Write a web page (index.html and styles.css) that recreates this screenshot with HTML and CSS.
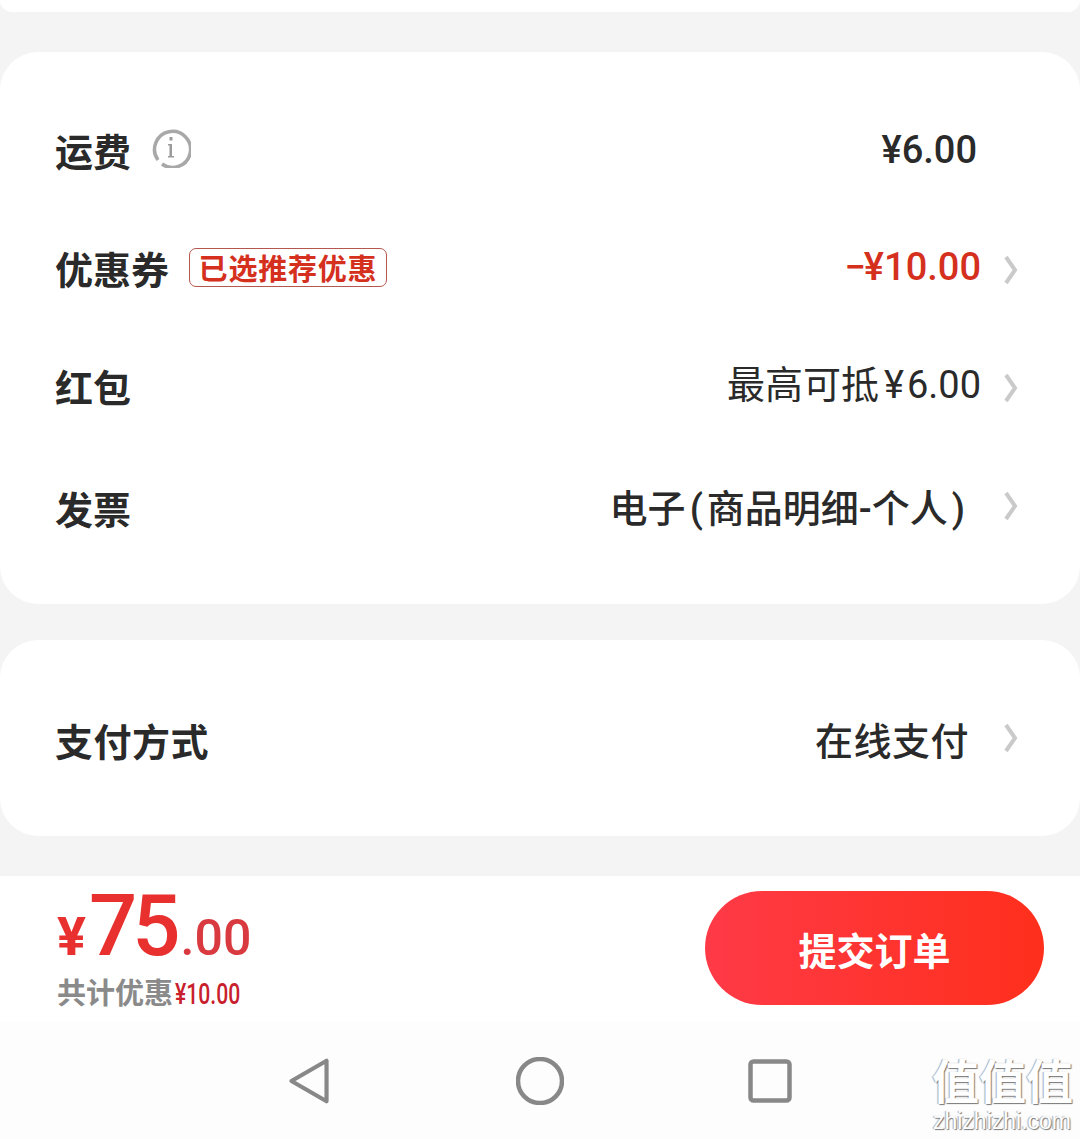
FILE: index.html
```html
<!DOCTYPE html>
<html lang="zh-CN">
<head>
<meta charset="utf-8">
<title>订单</title>
<link rel="stylesheet" href="styles.css">
</head>
<body>
<div class="page">
  <div class="card-top"></div>
  <section class="card card-fees">
    <div class="row">
      <div class="label-group">
        <span class="label">运费</span>
        <svg class="info" viewBox="0 0 40 40"><path class="info-ring" d="M11 36A18 18 0 1 0 7 32"/><rect class="info-mark" x="18.500" y="9" width="3" height="3.500"/><path class="info-mark" d="M17 16h4v12h2v1.500h-6V28h1.500V17.500H17z"/></svg>
      </div>
      <span class="value value-plain">¥6.00</span>
    </div>
    <div class="row">
      <div class="label-group">
        <span class="label">优惠券</span>
        <span class="badge">已选推荐优惠</span>
      </div>
      <div class="value-group">
        <span class="value value-red"><span class="minus">−</span>¥10.00</span>
        <svg class="chev" viewBox="0 0 14 30"><path d="M2 2l9 13-9 13"/></svg>
      </div>
    </div>
    <div class="row">
      <span class="label">红包</span>
      <div class="value-group">
        <span class="value value-thin">最高可抵<span class="yen">¥</span>6.00</span>
        <svg class="chev" viewBox="0 0 14 30"><path d="M2 2l9 13-9 13"/></svg>
      </div>
    </div>
    <div class="row row-last">
      <span class="label">发票</span>
      <div class="value-group value-group-wide">
        <span class="value">电子<span class="paren">(</span>商品明细-个人<span class="paren">)</span></span>
        <svg class="chev chev-up" viewBox="0 0 14 30"><path d="M2 2l9 13-9 13"/></svg>
      </div>
    </div>
  </section>
  <section class="card card-pay">
    <div class="row row-pay">
      <span class="label label-spaced">支付方式</span>
      <div class="value-group value-group-wide">
        <span class="value value-spaced">在线支付</span>
        <svg class="chev chev-pay" viewBox="0 0 14 30"><path d="M2 2l9 13-9 13"/></svg>
      </div>
    </div>
  </section>
  <footer class="footer">
    <div class="submit-bar">
      <div class="totals">
        <div class="price"><span class="price-cur">¥</span><span class="price-int">75</span><span class="price-dec">.00</span></div>
        <div class="saving">共计优惠<span class="saving-num">¥10.00</span></div>
      </div>
      <button class="submit" type="button">提交订单</button>
    </div>
    <nav class="navbar">
      <svg class="nav-icon nav-back" viewBox="0 0 48 52"><path d="M5 26L43 4v44z"/></svg>
      <svg class="nav-icon" viewBox="0 0 48 48"><circle cx="24" cy="24" r="22"/></svg>
      <svg class="nav-icon nav-square" viewBox="0 0 44 44"><rect x="2.500" y="2.500" width="39" height="39" rx="3"/></svg>
    </nav>
    <div class="watermark"><div class="wm-big">值值值</div><div class="wm-small">zhizhizhi.com</div></div>
  </footer>
</div>
</body>
</html>
```

FILE: styles.css
```css
* { box-sizing: border-box; }
html, body { margin: 0; padding: 0; }
body {
  background: #f4f4f4;
  font-family: "Roboto", "Noto Sans CJK SC", sans-serif;
  color: #2a2a2a;
}
.page {
  position: relative;
  width: 1080px;
  height: 1139px;
  overflow: hidden;
  display: flex;
  flex-direction: column;
}
.card-top {
  height: 12px;
  background: #fff;
  border-radius: 0 0 24px 24px;
  margin-bottom: 40px;
}
.card {
  background: #fff;
  border-radius: 38px;
}
.card-fees {
  height: 552px;
  padding-top: 39px;
  margin-bottom: 36px;
}
.card-pay {
  height: 196px;
  margin-bottom: 40px;
  display: flex;
  align-items: center;
}
.row {
  height: 118px;
  padding: 0 62px 0 55px;
  display: flex;
  align-items: center;
  justify-content: space-between;
}
.row-last { height: 126px; }
.row-pay { width: 100%; }
.label-group { display: flex; align-items: center; }
.label {
  font-size: 38px;
  font-weight: 700;
  line-height: 50px;
  margin-top: 6px;
  color: #2a2a2a;
}
.label-spaced { letter-spacing: 0.5px; margin-top: 10px; }
.info {
  width: 40px;
  height: 40px;
  margin-left: 20px;
  margin-top: -5px;
}
.info-ring { fill: none; stroke: #a8a8a8; stroke-width: 3.500; }
.info-mark { fill: #9a9a9a; }
.badge {
  margin-left: 20px;
  margin-top: -2px;
  height: 39px;
  width: 198px;
  border: 1.500px solid #b4574e;
  border-radius: 7px;
  display: flex;
  align-items: center;
  justify-content: center;
  font-size: 29px;
  font-weight: 700;
  letter-spacing: 0.8px;
  color: #d5301e;
}
.value-group { display: flex; align-items: center; }
.value {
  font-size: 38px;
  line-height: 50px;
  margin-top: -3px;
  margin-right: 23px;
  font-weight: 500;
  color: #2a2a2a;
}
.value-group-wide .value { margin-right: 35px; margin-top: 1px; }
.value-plain { margin-right: 41px; margin-top: -1px; }
.value-red { color: #d5301e; }
.value-thin { font-weight: 400; }
.yen { margin: 0 3px 0 5px; }
.minus { margin-right: -2px; }
.paren { margin: 0 4px; }
.value-spaced { letter-spacing: 0.5px; margin-top: 8px !important; }
.chev {
  width: 14px;
  height: 30px;
  flex: none;
  margin-top: 4px;
}
.chev-up { margin-top: -4px; }
.chev-pay { margin-top: 0; }
.chev path {
  fill: none;
  stroke: #cacaca;
  stroke-width: 4;
}
.footer {
  position: relative;
  flex: 1;
  background: #fff;
  display: flex;
  flex-direction: column;
}
.submit-bar {
  height: 146px;
  padding: 15px 36px 0 57px;
  display: flex;
  justify-content: space-between;
  align-items: flex-start;
}
.totals { display: flex; flex-direction: column; }
.price {
  height: 78px;
  display: flex;
  align-items: baseline;
  color: #e8312f;
  font-weight: 500;
  line-height: 70px;
}
.price-cur { font-size: 54px; font-weight: 700; margin-right: 3px; }
.price-int { font-size: 85px; letter-spacing: -5px; margin-right: 5px; margin-left: 0; }
.price-dec { font-size: 50px; color: #d93a3f; }
.saving {
  margin-top: 6px;
  font-size: 29px;
  line-height: 38px;
  font-weight: 700;
  color: #8a8a8a;
  white-space: nowrap;
}
.saving-num {
  display: inline-block;
  width: 65px;
  color: #c8202c;
  font-weight: 500;
  margin-left: 2px;
  transform: scaleX(0.73);
  transform-origin: left center;
}
.submit {
  width: 339px;
  height: 114px;
  border: 0;
  padding: 0;
  border-radius: 57px;
  background: linear-gradient(90deg, #ff3a47, #ff2f1c);
  color: #fff;
  font-family: inherit;
  font-size: 38px;
  font-weight: 700;
}
.navbar {
  flex: 1;
  background: #fdfdfd;
  display: grid;
  grid-template-columns: 230px 230px 230px;
  justify-content: center;
  justify-items: center;
  align-items: center;
}
.nav-icon { height: 48px; width: 48px; }
.nav-back { margin-right: 3px; }
.nav-square { width: 44px; height: 44px; }
.nav-icon path, .nav-icon circle, .nav-icon rect {
  fill: none;
  stroke: #888;
  stroke-width: 4.500;
  stroke-linejoin: round;
}
.watermark {
  position: absolute;
  right: 8px;
  bottom: 6px;
  width: 140px;
  text-align: center;
  color: #fff;
  text-shadow: 1px 1px 1px #777, -1px 0 1px #aaa;
}
.wm-big { font-size: 47px; line-height: 52px; font-weight: 700; white-space: nowrap; }
.wm-small { font-family: "Liberation Sans", sans-serif; font-size: 23px; line-height: 24px; white-space: nowrap; }
```
